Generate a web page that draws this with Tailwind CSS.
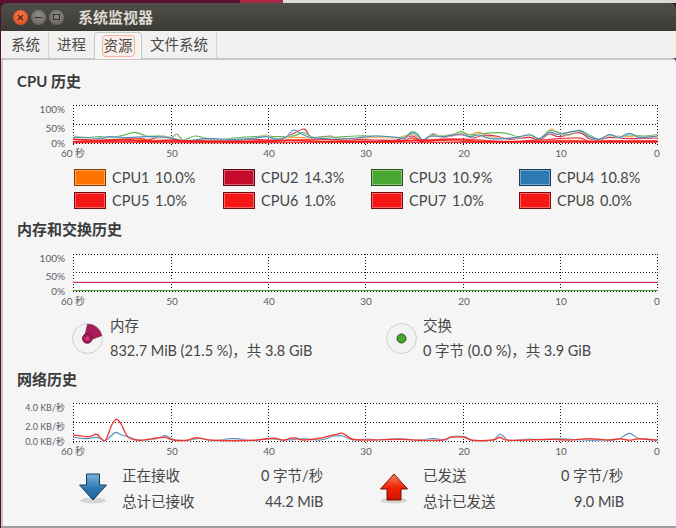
<!DOCTYPE html>
<html lang="zh">
<head>
<meta charset="utf-8">
<script src="https://cdn.jsdelivr.net/npm/@tailwindcss/browser@4"></script>
</head>
<body class="m-0 bg-[#4a1530]">
<div class="relative flex h-[528px] w-[676px] flex-col overflow-hidden bg-[#4a1530] font-['Lato','Noto_Sans_CJK_SC',sans-serif] text-[14.5px] text-[#474747]">
  <!-- desktop strip behind the window -->
  <div class="flex h-[3px] shrink-0">
    <div class="w-[240px] bg-[#5b1230]"></div>
    <div class="w-[43px] bg-[#a82c48]"></div>
    <div class="flex-1 bg-[#dcdad6]"></div>
  </div>
  <div class="ml-[1px] flex flex-1 flex-col overflow-hidden rounded-t-[6px] border-b-2 border-[#a09e9c]">
    <!-- title bar -->
    <div class="flex h-[28px] shrink-0 items-center bg-gradient-to-b from-[#504e48] to-[#3c3b37] pl-[12px]">
      <div class="flex items-center gap-[3px]">
        <span class="flex h-[15px] w-[15px] items-center justify-center rounded-full bg-[radial-gradient(circle_at_50%_35%,#f5774a,#d8481c)]">
          <svg width="7" height="7" viewBox="0 0 7 7"><path d="M1 1l5 5M6 1l-5 5" stroke="#4a2010" stroke-width="1.2"/></svg>
        </span>
        <span class="flex h-[15px] w-[15px] items-center justify-center rounded-full bg-[radial-gradient(circle_at_50%_35%,#8f8d86,#5e5c56)]">
          <span class="h-px w-[7px] bg-[#302f2c]"></span>
        </span>
        <span class="flex h-[15px] w-[15px] items-center justify-center rounded-full bg-[radial-gradient(circle_at_50%_35%,#8f8d86,#5e5c56)]">
          <span class="h-[6px] w-[7px] border border-[#302f2c]"></span>
        </span>
      </div>
      <span class="ml-[14px] text-[15px] font-bold text-[#dfdbd2]">系统监视器</span>
    </div>
    <!-- tabs -->
    <div class="flex h-[27px] shrink-0 items-end bg-[#f2f1f0] pl-[2px]">
      <div class="flex h-[26px] w-[46px] items-center justify-center border-r border-[#d4d2d0] text-[#4a4a4a]">系统</div>
      <div class="flex h-[26px] w-[45px] items-center justify-center text-[#4a4a4a]">进程</div>
      <div class="z-10 -mb-px flex h-[27px] w-[48px] items-center justify-center rounded-t-[4px] border border-b-0 border-[#c9c7c5] bg-[#f5f5f5]">
        <span class="flex h-[22px] w-[33px] items-center justify-center rounded-[4px] border border-[#f6b39b] bg-[#fbeee8]">资源</span>
      </div>
      <div class="flex h-[26px] w-[75px] items-center justify-center border-r border-[#d4d2d0] text-[#4a4a4a]">文件系统</div>
    </div>
    <!-- panel -->
    <div class="flex flex-1 flex-col rounded-tr-[4px] border-t-2 border-l-2 border-[#c9c7c5] bg-[#f5f5f5] pl-[14px]">
      <!-- CPU -->
      <h2 class="mt-[11px] h-[20px] text-[15px] leading-[20px] font-bold text-[#3c3c3c]">CPU 历史</h2>
      <svg id="cpu" class="mt-[9px] -ml-[17px] block shrink-0" width="676" height="60" viewBox="0 100 676 60"></svg>
      <div class="mt-[9px] grid grid-cols-[149px_148px_148px_148px] gap-y-[6px] pl-[57px]">
        <div class="flex h-[17px] items-center"><span class="h-[17px] w-[32px] border border-[#7a3d05] bg-[#ff7300] shadow-[inset_0_0_0_1px_rgba(255,255,255,0.35)]"></span><span class="ml-[6px] w-[43px]">CPU1</span><span>10.0%</span></div>
        <div class="flex h-[17px] items-center"><span class="h-[17px] w-[32px] border border-[#5f0816] bg-[#c60c2c] shadow-[inset_0_0_0_1px_rgba(255,255,255,0.35)]"></span><span class="ml-[6px] w-[43px]">CPU2</span><span>14.3%</span></div>
        <div class="flex h-[17px] items-center"><span class="h-[17px] w-[32px] border border-[#245218] bg-[#48a631] shadow-[inset_0_0_0_1px_rgba(255,255,255,0.35)]"></span><span class="ml-[6px] w-[43px]">CPU3</span><span>10.9%</span></div>
        <div class="flex h-[17px] items-center"><span class="h-[17px] w-[32px] border border-[#163c5a] bg-[#2d79b3] shadow-[inset_0_0_0_1px_rgba(255,255,255,0.35)]"></span><span class="ml-[6px] w-[43px]">CPU4</span><span>10.8%</span></div>
        <div class="flex h-[17px] items-center"><span class="h-[17px] w-[32px] border border-[#7a0b0b] bg-[#f51616] shadow-[inset_0_0_0_1px_rgba(255,255,255,0.35)]"></span><span class="ml-[6px] w-[43px]">CPU5</span><span>1.0%</span></div>
        <div class="flex h-[17px] items-center"><span class="h-[17px] w-[32px] border border-[#7a0b0b] bg-[#f51616] shadow-[inset_0_0_0_1px_rgba(255,255,255,0.35)]"></span><span class="ml-[6px] w-[43px]">CPU6</span><span>1.0%</span></div>
        <div class="flex h-[17px] items-center"><span class="h-[17px] w-[32px] border border-[#7a0b0b] bg-[#f51616] shadow-[inset_0_0_0_1px_rgba(255,255,255,0.35)]"></span><span class="ml-[6px] w-[43px]">CPU7</span><span>1.0%</span></div>
        <div class="flex h-[17px] items-center"><span class="h-[17px] w-[32px] border border-[#7a0b0b] bg-[#f51616] shadow-[inset_0_0_0_1px_rgba(255,255,255,0.35)]"></span><span class="ml-[6px] w-[43px]">CPU8</span><span>0.0%</span></div>
      </div>
      <!-- memory -->
      <h2 class="mt-[10px] h-[20px] text-[15px] leading-[20px] font-bold text-[#3c3c3c]">内存和交换历史</h2>
      <svg id="mem" class="mt-[9px] -ml-[17px] block shrink-0" width="676" height="60" viewBox="0 248 676 60"></svg>
      <div class="mt-[7px] flex h-[48px]">
        <div class="flex w-[369px] pl-[55px]">
          <svg class="mt-[8px] shrink-0" width="32" height="32" viewBox="0 0 32 32">
            <circle cx="15.500" cy="15.500" r="15" fill="#f3f3f3" stroke="#cfcfcf" stroke-width="1"/>
            <path d="M13 12 L15.500 1.300 A14.500 14.500 0 0 1 29.700 12.700 L18 17 Z" fill="#ad1a58" stroke="#5a1436" stroke-width=".6"/>
            <circle cx="15.300" cy="15.500" r="4.800" fill="#ad1a58" stroke="#4d1030" stroke-width=".8"/>
            <circle cx="15.300" cy="15.500" r="2" fill="#d0407f"/>
          </svg>
          <div class="ml-[6px] flex flex-col">
            <span class="h-[24px] leading-[22px]">内存</span>
            <span class="h-[24px] leading-[24px] whitespace-nowrap">832.7 MiB (21.5 %)，共 3.8 GiB</span>
          </div>
        </div>
        <div class="flex">
          <svg class="mt-[8px] shrink-0" width="32" height="32" viewBox="0 0 32 32">
            <circle cx="15.500" cy="15.500" r="15" fill="#f3f3f3" stroke="#cfcfcf" stroke-width="1"/>
            <circle cx="15.500" cy="15.500" r="4.500" fill="#48a631" stroke="#245218" stroke-width="1"/>
          </svg>
          <div class="ml-[5px] flex flex-col">
            <span class="h-[24px] leading-[22px]">交换</span>
            <span class="h-[24px] leading-[24px] whitespace-nowrap">0 字节 (0.0 %)，共 3.9 GiB</span>
          </div>
        </div>
      </div>
      <!-- network -->
      <h2 class="mt-[6px] h-[20px] text-[15px] leading-[20px] font-bold text-[#3c3c3c]">网络历史</h2>
      <svg id="net" class="mt-[9px] -ml-[17px] block shrink-0" width="676" height="60" viewBox="0 398 676 60"></svg>
      <div class="mt-[6px] flex">
        <div class="flex w-[362px] pl-[61px]">
          <svg class="mt-[9px] shrink-0" width="30" height="32" viewBox="0 0 30 32">
            <defs><linearGradient id="blue" x1="0" y1="0" x2="0" y2="1"><stop offset="0" stop-color="#7fb3d9"/><stop offset=".55" stop-color="#2d79b3"/><stop offset="1" stop-color="#1f5f92"/></linearGradient></defs>
            <ellipse cx="15" cy="27.500" rx="13" ry="3" fill="#000" opacity=".13"/>
            <path d="M8.500 1 H21.500 V12 H28.500 L15 27 L1.500 12 H8.500 Z" fill="url(#blue)" stroke="#163c5a" stroke-width="1"/>
          </svg>
          <div class="ml-[14px] grid grid-cols-[100px_80px] text-[14.5px]">
            <span class="h-[25px] leading-[24px]">正在接收</span><span class="h-[25px] leading-[24px] pl-[39px] whitespace-nowrap">0 字节/秒</span>
            <span class="h-[25px] leading-[26px]">总计已接收</span><span class="h-[25px] leading-[26px] pl-[43px] whitespace-nowrap">44.2 MiB</span>
          </div>
        </div>
        <div class="flex">
          <svg class="mt-[9px] shrink-0" width="30" height="32" viewBox="0 0 30 32">
            <defs><linearGradient id="red" x1="0" y1="0" x2="0" y2="1"><stop offset="0" stop-color="#f9806a"/><stop offset=".55" stop-color="#ef2000"/><stop offset="1" stop-color="#cc1500"/></linearGradient></defs>
            <ellipse cx="15" cy="27.500" rx="13" ry="3" fill="#000" opacity=".13"/>
            <path d="M15 1 L28.500 16 H22 V27 H8 V16 H1.500 Z" fill="url(#red)" stroke="#7a1206" stroke-width="1"/>
          </svg>
          <div class="ml-[14px] grid grid-cols-[100px_90px] text-[14.5px]">
            <span class="h-[25px] leading-[24px]">已发送</span><span class="h-[25px] leading-[24px] pl-[38px] whitespace-nowrap">0 字节/秒</span>
            <span class="h-[25px] leading-[26px]">总计已发送</span><span class="h-[25px] leading-[26px] pl-[51px] whitespace-nowrap">9.0 MiB</span>
          </div>
        </div>
      </div>
    </div>
  </div>
</div>
<script>
var NS='http://www.w3.org/2000/svg';
function el(s,n,a,t){var e=document.createElementNS(NS,n);for(var k in a)e.setAttribute(k,a[k]);if(t)e.textContent=t;s.appendChild(e);return e;}
function smooth(p){var d='M'+p[0][0].toFixed(1)+' '+p[0][1].toFixed(1);for(var i=0;i<p.length-1;i++){var a=p[Math.max(i-1,0)],b=p[i],c=p[i+1],f=p[Math.min(i+2,p.length-1)];d+=' C'+(b[0]+(c[0]-a[0])/6).toFixed(1)+' '+(b[1]+(c[1]-a[1])/6).toFixed(1)+' '+(c[0]-(f[0]-b[0])/6).toFixed(1)+' '+(c[1]-(f[1]-b[1])/6).toFixed(1)+' '+c[0].toFixed(1)+' '+c[1].toFixed(1);}return d;}
/* points read off a 3x crop: left part in crop px, right part offset by 336px */
function pts(l,r,dy){dy=dy||0;var o=[];l.forEach(function(q){o.push([q[0]/3,dy+q[1]/3]);});r.forEach(function(q){o.push([336+q[0]/3,dy+q[1]/3]);});return o;}
var FF='Lato, Noto Sans CJK SC, sans-serif';
function grid(s,top,mid,bot,labels,size){
  el(s,'rect',{x:73,y:top,width:584,height:bot-top,fill:'#fff'});
  [top,mid,bot].forEach(function(y){el(s,'path',{d:'M73 '+(y+.5)+'H658',stroke:'#111','stroke-width':1,'stroke-dasharray':'1 2',fill:'none'});});
  [73,171,268,365,463,560,657].forEach(function(x){el(s,'path',{d:'M'+(x+.5)+' '+top+'V'+(bot+2),stroke:'#111','stroke-width':1,'stroke-dasharray':'1 2',fill:'none'});});
  labels.forEach(function(t,i){el(s,'text',{x:65,y:[top+7.5,mid+7.5,bot+4][i],'text-anchor':'end','font-size':size,fill:'#5b6068','font-family':FF},t);});
  ['60 秒','50','40','30','20','10','0'].forEach(function(t,i){el(s,'text',{x:[73,172,269,366,464,561,657][i],y:bot+14,'text-anchor':'middle','font-size':10,fill:'#5b6068','font-family':FF},t);});
}
function line(s,p,c,w){el(s,'path',{d:smooth(p),fill:'none',stroke:'#fff','stroke-width':w+1.2,opacity:.5});el(s,'path',{d:smooth(p),fill:'none',stroke:c,'stroke-width':w,'stroke-opacity':.85});}

var c=document.getElementById('cpu');
grid(c,105,124,143,['100%','50%','0%'],10);
var green=pts([[220,408],[260,412],[300,410],[340,412],[370,406],[405,397],[440,408],[480,408],[515,412],[530,402],[550,420],[585,408],[620,415],[670,418],[700,414],[760,410],[800,408],[830,410],[880,408],[910,398],[940,412],[980,410]],[[0,412],[60,408],[120,408],[180,412],[205,412],[228,395],[245,402],[260,420],[285,405],[320,408],[345,405],[375,395],[400,405],[430,402],[450,400],[490,398],[520,402],[550,412],[580,402],[610,416],[640,392],[670,398],[700,405],[730,390],[760,405],[790,418],[820,405],[850,412],[880,405],[920,408],[964,404]]);
var blue=pts([[220,412],[300,415],[330,410],[380,413],[440,410],[500,412],[550,422],[620,416],[700,418],[760,415],[800,410],[830,418],[860,410],[880,390],[905,402],[930,412],[980,416]],[[0,418],[60,414],[120,408],[180,412],[205,415],[228,398],[245,406],[260,420],[285,408],[320,410],[375,402],[400,410],[430,405],[460,415],[520,415],[580,405],[610,416],[640,397],[670,403],[730,392],[760,410],[790,418],[820,404],[850,412],[880,400],[910,412],[964,408]]);
var orange=pts([[220,416],[300,418],[380,416],[440,418],[500,412],[550,424],[620,418],[700,420],[760,416],[795,405],[830,416],[880,412],[920,414],[980,418]],[[0,420],[60,416],[120,412],[180,414],[228,404],[260,420],[285,410],[330,406],[375,400],[400,404],[430,397],[460,410],[520,414],[580,408],[610,416],[645,388],[670,400],[730,394],[760,412],[790,418],[820,408],[880,410],[964,410]]);
var crimson=pts([[220,418],[300,420],[380,418],[430,424],[490,408],[550,424],[620,420],[700,422],[760,418],[830,420],[870,406],[912,387],[935,412],[990,408]],[[0,414],[60,418],[120,420],[180,420],[228,408],[260,424],[288,402],[320,412],[375,404],[410,414],[440,406],[480,408],[520,418],[580,412],[610,420],[640,402],[670,410],[730,398],[760,416],[790,420],[820,412],[880,416],[964,414]]);
line(c,orange,'#f57900',1.2);line(c,crimson,'#c60c2c',1.2);line(c,green,'#48a631',1.2);line(c,blue,'#2d79b3',1.2);
var r1=pts([[220,418],[300,422],[420,416],[450,425],[515,420],[600,425],[800,425],[860,420],[960,425]],[[0,425],[180,424],[228,414],[260,426],[340,418],[400,422],[520,425],[640,418],[730,414],[760,425],[820,422],[964,425]]);
var r2=pts([[220,426],[400,423],[500,425],[700,425],[800,421],[1000,425]],[[200,422],[300,421],[420,425],[600,424],[700,421],[800,425],[964,424]]);
var r3=pts([[220,428],[400,427],[800,428],[1000,427]],[[200,427],[500,427],[750,427],[964,427]]);
var r4=pts([[220,424],[500,421],[760,426],[940,419]],[[150,425],[350,417],[500,424],[670,425],[964,422]]);
[r4,r1,r2,r3].forEach(function(p){el(c,'path',{d:smooth(p),fill:'none',stroke:'#f51616','stroke-width':1.3,'stroke-opacity':.8});});

var m=document.getElementById('mem');
grid(m,254,272,291,['100%','50%','0%'],10);
el(m,'rect',{x:73,y:281,width:585,height:1,fill:'#e6d5df'});
el(m,'rect',{x:73,y:282,width:585,height:1,fill:'#c9326f'});
el(m,'rect',{x:73,y:290,width:585,height:1,fill:'#48a631'});

var n=document.getElementById('net');
grid(n,403,422,441,['4.0 KB/秒','2.0 KB/秒','0.0 KB/秒'],9);
var nb=pts([[220,232],[260,236],[290,232],[315,242],[335,226],[348,217],[365,225],[390,232],[420,241],[470,236],[495,227],[520,238],[560,242],[600,235],[640,242],[700,236],[760,242],[800,236],[860,240],[910,236],[960,240],[1000,228]],[[0,228],[20,228],[50,240],[90,237],[130,240],[190,236],[250,240],[290,236],[330,240],[345,230],[385,230],[410,241],[470,240],[492,222],[520,241],[580,237],[620,240],[670,236],[740,240],[820,241],[850,236],[880,220],[910,236],[964,241]],360);
var nr=pts([[220,225],[265,230],[290,223],[315,242],[335,195],[350,178],[365,195],[385,232],[420,241],[470,234],[495,232],[520,240],[560,241],[590,233],[640,241],[760,241],[820,235],[850,241],[880,233],[910,240],[960,235],[1000,225]],[[0,224],[20,220],[50,238],[100,240],[190,238],[250,241],[320,240],[345,232],[385,232],[410,241],[470,240],[492,232],[520,241],[640,238],[700,240],[760,236],[820,240],[850,236],[880,241],[910,236],[964,241]],360);
line(n,nb,'#2d79b3',1.2);line(n,nr,'#f01a10',1.4);
</script>
</body>
</html>
